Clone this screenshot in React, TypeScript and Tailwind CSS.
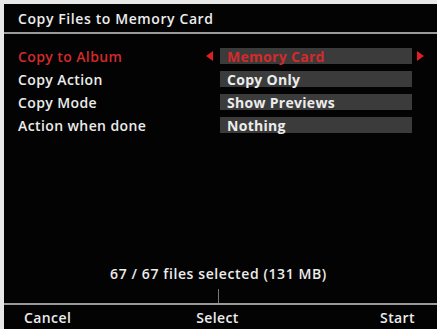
export default function App() {
  const rows = [
    { label: "Copy to Album", value: "Memory Card", active: true },
    { label: "Copy Action", value: "Copy Only", active: false },
    { label: "Copy Mode", value: "Show Previews", active: false },
    { label: "Action when done", value: "Nothing", active: false },
  ];

  return (
    <div
      className="w-[437px] h-[329px] overflow-hidden bg-[#e8e8e8] pt-[4px] pl-[4px]"
      style={{ fontFamily: '"Open Sans", "DejaVu Sans", sans-serif' }}
    >
      <div className="flex flex-col h-full bg-[#030303] text-[#ececec]">
        {/* Title */}
        <div className="h-[28px] flex items-center pl-[14px] text-[14px] font-semibold tracking-[0.6px]">
          Copy Files to Memory Card
        </div>
        <div className="h-[2px] bg-[#9a9a9a]" />

        {/* Settings */}
        <div className="flex flex-col gap-[7px] pt-[14px]">
          {rows.map((row) => (
            <div key={row.label} className="flex items-center h-[16px]">
              <div
                className={`w-[202px] pl-[14px] text-[14px] font-semibold tracking-[0.4px] ${
                  row.active ? "text-[#d42a2a]" : "text-[#ececec]"
                }`}
              >
                {row.label}
              </div>
              <div className="w-[14px] flex justify-start">
                {row.active && (
                  <span className="w-0 h-0 border-y-[5px] border-y-transparent border-r-[7px] border-r-[#e02020]" />
                )}
              </div>
              <div
                className={`w-[192px] h-[16px] bg-[#3b3b3b] flex items-center pl-[7px] text-[14px] font-bold tracking-[0.3px] ${
                  row.active ? "text-[#d42a2a]" : "text-[#ececec]"
                }`}
              >
                {row.value}
              </div>
              <div className="w-[14px] flex justify-start pl-[5px]">
                {row.active && (
                  <span className="w-0 h-0 border-y-[5px] border-y-transparent border-l-[7px] border-l-[#e02020]" />
                )}
              </div>
            </div>
          ))}
        </div>

        {/* Summary */}
        <div className="flex-1 flex flex-col justify-end items-center">
          <div className="text-[14px] font-semibold tracking-[0.6px] pr-[4px] mb-[5px]">
            67 / 67 files selected (131 MB)
          </div>
          <div className="w-[1px] h-[14px] bg-[#777] mr-[4px]" />
        </div>
        <div className="h-[2px] bg-[#9a9a9a]" />

        {/* Buttons */}
        <div className="h-[24px] grid grid-cols-3 items-center text-[14px] font-semibold tracking-[0.4px]">
          <div className="pl-[20px]">Cancel</div>
          <div className="text-center pr-[6px]">Select</div>
          <div className="text-right pr-[22px]">Start</div>
        </div>
      </div>
    </div>
  );
}
